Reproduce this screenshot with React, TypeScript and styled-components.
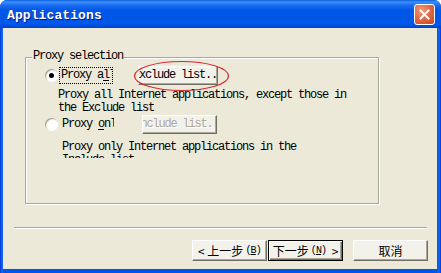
import React from "react";
import styled, { createGlobalStyle } from "styled-components";

const Global = createGlobalStyle`
  html, body { margin: 0; padding: 0; background: #ffffff; }
  * { box-sizing: border-box; }
`;

const Window = styled.div`
  width: 441px;
  height: 273px;
  display: flex;
  flex-direction: column;
  background: linear-gradient(to right, #0831d9 0px, #166aee 2px, #0055ea 4px, #0055ea 437px, #166aee 439px, #0831d9 441px);
  border-radius: 7px 7px 0 0;
  overflow: hidden;
`;

const TitleBar = styled.div`
  height: 28px;
  flex: none;
  display: flex;
  align-items: center;
  padding: 4px 6px 0 7px;
  background: linear-gradient(
    to bottom,
    #0a5fe0 0px,
    #3d91f7 2px,
    #1c6cf0 5px,
    #0058e8 10px,
    #0055e5 18px,
    #0058ee 24px,
    #0049cc 27px,
    #0043b8 28px
  );
`;

const Title = styled.div`
  flex: 1;
  font-family: "Liberation Mono", "DejaVu Sans Mono", monospace;
  font-weight: bold;
  font-size: 13px;
  letter-spacing: 0.1px;
  color: #ffffff;
  text-shadow: 1px 1px 0 #0a1a80;
  line-height: 16px;
`;

const CloseButton = styled.div`
  width: 21px;
  height: 21px;
  margin-top: -3px;
  border: 1px solid #ffffff;
  border-radius: 3px;
  background: radial-gradient(circle at 35% 30%, #f39a7c 0%, #e26a46 45%, #c9461f 100%);
  display: flex;
  align-items: center;
  justify-content: center;
`;

const Body = styled.div`
  flex: 1;
  margin: 0 4px 4px 3px;
  background: #ece9d8;
  display: flex;
  flex-direction: column;
`;

const GroupBox = styled.div`
  position: relative;
  margin: 29px 0 0 22px;
  width: 354px;
  height: 147px;
  border: 1px solid #aca899;
  box-shadow: inset 1px 1px 0 #ffffff, 1px 1px 0 #ffffff;
  padding: 8px 0 0 19px;
  display: flex;
  flex-direction: column;
  font-family: "Liberation Mono", "DejaVu Sans Mono", monospace;
  font-size: 12px;
  letter-spacing: -1.2px;
  color: #000000;
`;

const Legend = styled.div`
  position: absolute;
  top: -8px;
  left: 6px;
  padding: 0 1px;
  background: #ece9d8;
  line-height: 13px;
  white-space: nowrap;
`;

const OptionRow = styled.div<{ $top: number }>`
  display: flex;
  align-items: center;
  height: 19px;
  margin-top: ${(p) => p.$top}px;
`;

const Radio = styled.div<{ $checked?: boolean }>`
  position: relative;
  width: 13px;
  height: 13px;
  flex: none;
  border-radius: 50%;
  background: radial-gradient(circle at 62% 62%, #ffffff 0%, #ffffff 40%, #dcd9c8 100%);
  box-shadow: inset 1px 1px 0 #a7a496, inset -1px -1px 0 #ffffff;
  &::after {
    content: "";
    display: ${(p) => (p.$checked ? "block" : "none")};
    position: absolute;
    left: 4px;
    top: 4px;
    width: 5px;
    height: 5px;
    border-radius: 50%;
    background: #000000;
  }
`;

const OptionLabel = styled.div<{ $focused?: boolean; $pad: number; $width: number }>`
  margin-left: 1px;
  width: ${(p) => p.$width}px;
  height: 17px;
  border: 1px dotted ${(p) => (p.$focused ? "#000000" : "transparent")};
  padding-left: ${(p) => p.$pad}px;
  line-height: 15px;
  white-space: nowrap;
  overflow: hidden;
  u { text-decoration-thickness: 1px; text-underline-offset: 2px; }
`;

const SmallButton = styled.div<{ $width: number; $gap: number; $disabled?: boolean }>`
  margin-left: ${(p) => p.$gap}px;
  width: ${(p) => p.$width}px;
  height: 19px;
  display: flex;
  align-items: center;
  justify-content: center;
  overflow: hidden;
  white-space: nowrap;
  background: #f2f1ea;
  border-top: 1px solid #ffffff;
  border-left: 1px solid #ffffff;
  border-right: 1px solid #716f64;
  border-bottom: 1px solid #716f64;
  box-shadow: inset -1px -1px 0 #aca899;
  color: ${(p) => (p.$disabled ? "#aca899" : "#000000")};
  text-shadow: ${(p) => (p.$disabled ? "1px 1px 0 #ffffff" : "none")};
  line-height: 15px;
`;

const Description = styled.div<{ $top: number; $left: number; $clip?: number }>`
  margin: ${(p) => p.$top}px 0 0 ${(p) => p.$left}px;
  line-height: 13px;
  white-space: pre;
  overflow: hidden;
  height: ${(p) => (p.$clip ? `${p.$clip}px` : "auto")};
`;

const Annotation = styled.svg`
  position: absolute;
  left: 107px;
  top: 2px;
  pointer-events: none;
`;

const Separator = styled.div`
  margin: 23px 10px 0 11px;
  height: 2px;
  border-top: 1px solid #aca899;
  border-bottom: 1px solid #ffffff;
`;

const ButtonRow = styled.div`
  display: flex;
  justify-content: flex-end;
  margin-top: 11px;
  padding-right: 9px;
`;

const DialogButton = styled.div<{ $default?: boolean; $gap: number }>`
  width: 75px;
  height: 21px;
  margin-left: ${(p) => p.$gap}px;
  display: flex;
  align-items: center;
  justify-content: center;
  background: #f2f1ea;
  border: 1px solid;
  border-color: ${(p) => (p.$default ? "#000000" : "#ffffff #716f64 #716f64 #ffffff")};
  box-shadow: ${(p) =>
    p.$default
      ? "inset 1px 1px 0 #ffffff, inset -1px -1px 0 #716f64, inset -2px -2px 0 #aca899"
      : "inset -1px -1px 0 #aca899"};
  font-family: "Noto Sans CJK SC", "Noto Sans", sans-serif;
  font-size: 12px;
  color: #000000;
  white-space: pre;
  line-height: 17px;
`;

const Accel = styled.span`
  font-family: "Liberation Mono", monospace;
  font-size: 10px;
  letter-spacing: -0.8px;
  margin-left: 2px;
  u { text-underline-offset: 1px; }
`;

export default function App() {
  return (
    <>
      <Global />
      <Window>
        <TitleBar>
          <Title>Applications</Title>
          <CloseButton>
            <svg width="13" height="13" viewBox="0 0 13 13">
              <path d="M2.5 2.5 L10.5 10.5 M10.5 2.5 L2.5 10.5" stroke="#ffffff" strokeWidth="2" strokeLinecap="square" />
            </svg>
          </CloseButton>
        </TitleBar>
        <Body>
          <GroupBox>
            <Legend>Proxy selection</Legend>
            <OptionRow $top={0}>
              <Radio $checked />
              <OptionLabel $focused $pad={1} $width={54}>
                Proxy a<u>l</u>l
              </OptionLabel>
              <SmallButton $width={80} $gap={25}>Exclude list...</SmallButton>
            </OptionRow>
            <Description $top={4} $left={13}>
              {"Proxy all Internet applications, except those in\nthe Exclude list"}
            </Description>
            <OptionRow $top={0}>
              <Radio />
              <OptionLabel $pad={2} $width={56}>
                Proxy <u>o</u>nly
              </OptionLabel>
              <SmallButton $width={75} $gap={27} $disabled>
                Include list...
              </SmallButton>
            </OptionRow>
            <Description $top={7} $left={17} $clip={17}>
              {"Proxy only Internet applications in the\nInclude list"}
            </Description>
            <Annotation width="97" height="32" viewBox="0 0 97 32">
              <ellipse cx="48.5" cy="16" rx="47" ry="14.5" fill="none" stroke="#d9262f" strokeWidth="1.2" />
            </Annotation>
          </GroupBox>
          <Separator />
          <ButtonRow>
            <DialogButton $gap={0}>
              {"< 上一步"}<Accel>(<u>B</u>)</Accel>
            </DialogButton>
            <DialogButton $default $gap={1}>
              下一步<Accel>(<u>N</u>)</Accel>{"  >"}
            </DialogButton>
            <DialogButton $gap={10}>取消</DialogButton>
          </ButtonRow>
        </Body>
      </Window>
    </>
  );
}
